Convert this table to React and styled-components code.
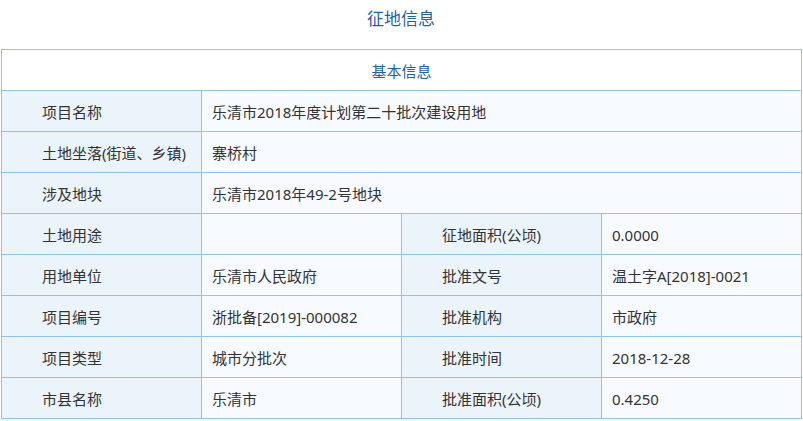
import React from "react";
import styled, { createGlobalStyle } from "styled-components";

const GlobalStyle = createGlobalStyle`
  html, body {
    margin: 0;
    padding: 0;
    background: #fff;
  }
  body {
    font-family: "Noto Sans", "Noto Sans CJK SC", sans-serif;
  }
`;

const Page = styled.div`
  width: 803px;
  padding: 0 2px 0 1px;
  box-sizing: border-box;
`;

const Title = styled.h2`
  margin: 0;
  height: 49px;
  line-height: 38px;
  text-align: center;
  font-size: 17px;
  font-weight: normal;
  color: #1f5fb0;
`;

const Table = styled.table`
  width: 800px;
  table-layout: fixed;
  border-collapse: collapse;
  font-size: 15px;
  color: #333;
`;

const Row = styled.tr`
  height: 41px;
`;

const Caption = styled.th`
  border: 1px solid #8fc3ec;
  background: #fff;
  color: #1f5fb0;
  font-weight: normal;
  font-size: 15px;
  text-align: center;
  padding: 0;
`;

const Cell = styled.td`
  border: 1px solid #8fc3ec;
  padding: 1px 0 0 ${(p) => (p.$label ? 40 : 10)}px;
  background: ${(p) => (p.$label ? "#ebf3fb" : "#f7fbff")};
  white-space: nowrap;
  overflow: hidden;
`;

const wide = [
  ["项目名称", "乐清市2018年度计划第二十批次建设用地"],
  ["土地坐落(街道、乡镇)", "寨桥村"],
  ["涉及地块", "乐清市2018年49-2号地块"],
];

const pairs = [
  ["土地用途", "", "征地面积(公顷)", "0.0000"],
  ["用地单位", "乐清市人民政府", "批准文号", "温土字A[2018]-0021"],
  ["项目编号", "浙批备[2019]-000082", "批准机构", "市政府"],
  ["项目类型", "城市分批次", "批准时间", "2018-12-28"],
  ["市县名称", "乐清市", "批准面积(公顷)", "0.4250"],
];

export default function App() {
  return (
    <Page>
      <GlobalStyle />
      <Title>征地信息</Title>
      <Table>
        <colgroup>
          <col style={{ width: 200 }} />
          <col style={{ width: 200 }} />
          <col style={{ width: 200 }} />
          <col style={{ width: 200 }} />
        </colgroup>
        <tbody>
          <Row>
            <Caption colSpan={4}>基本信息</Caption>
          </Row>
          {wide.map(([k, v]) => (
            <Row key={k}>
              <Cell $label>{k}</Cell>
              <Cell colSpan={3}>{v}</Cell>
            </Row>
          ))}
          {pairs.map(([k1, v1, k2, v2]) => (
            <Row key={k1}>
              <Cell $label>{k1}</Cell>
              <Cell>{v1}</Cell>
              <Cell $label>{k2}</Cell>
              <Cell>{v2}</Cell>
            </Row>
          ))}
        </tbody>
      </Table>
    </Page>
  );
}
